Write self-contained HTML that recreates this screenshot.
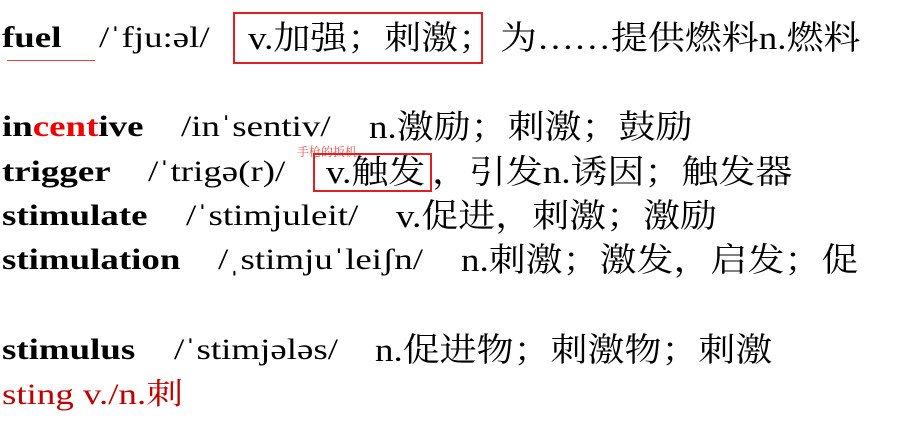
<!DOCTYPE html>
<html><head><meta charset="utf-8"><style>
body{margin:0;width:905px;height:433px;background:#fff;position:relative;overflow:hidden;font-family:"Liberation Serif","Noto Serif CJK SC",serif;font-size:30px;color:#000}
.s{position:absolute;white-space:nowrap;line-height:34px;transform:scaleX(1.23);transform-origin:0 0}
.c{font-size:33px;transform:scaleX(1.12);margin-top:1px}
b{font-weight:bold}
.r{color:#e00}
.box{position:absolute;border:2px solid #e02020}
</style></head><body>
<span class="s" style="left:2px;top:21px"><b>fuel</b></span>
<div style="position:absolute;left:7px;top:60px;width:88px;height:1px;background:#e04040"></div>
<span class="s" style="left:99px;top:21px">/ˈfju:əl/</span>
<div class="box" style="left:233px;top:12px;width:246px;height:48px"></div>
<span class="s c" style="left:248px;top:21px">v.加强；刺激；</span>
<span class="s c" style="left:500px;top:21px">为……提供燃料n.燃料</span>

<span class="s" style="left:2px;top:110px"><b>in<span class="r">cent</span>ive</b></span>
<span class="s" style="left:181px;top:110px">/inˈsentiv/</span>
<span class="s c" style="left:369px;top:110px">n.激励；刺激；鼓励</span>

<span class="s" style="left:2px;top:155px"><b>trigger</b></span>
<span class="s" style="left:148px;top:155px">/ˈtrigə(r)/</span>
<span class="s" style="left:297px;top:145px;font-size:12px;line-height:14px;color:#f05050;transform:none">手枪的扳机</span>
<div class="box" style="left:313px;top:153px;width:115px;height:35px"></div>
<span class="s c" style="left:326px;top:155px">v.触发</span>
<span class="s c" style="left:432px;top:155px">，引发n.诱因；触发器</span>

<span class="s" style="left:2px;top:199px"><b>stimulate</b></span>
<span class="s" style="left:186px;top:199px">/ˈstimjuleit/</span>
<span class="s c" style="left:396px;top:199px">v.促进，刺激；激励</span>

<span class="s" style="left:2px;top:243px"><b>stimulation</b></span>
<span class="s" style="left:218px;top:243px">/ˌstimjuˈleiʃn/</span>
<span class="s c" style="left:461px;top:243px">n.刺激；激发，启发；促</span>

<span class="s" style="left:2px;top:333px"><b>stimulus</b></span>
<span class="s" style="left:174px;top:333px">/ˈstimjələs/</span>
<span class="s c" style="left:375px;top:333px">n.促进物；刺激物；刺激</span>

<span class="s" style="left:2px;top:378px;color:#c00000">sting v./n.刺</span>
</body></html>
